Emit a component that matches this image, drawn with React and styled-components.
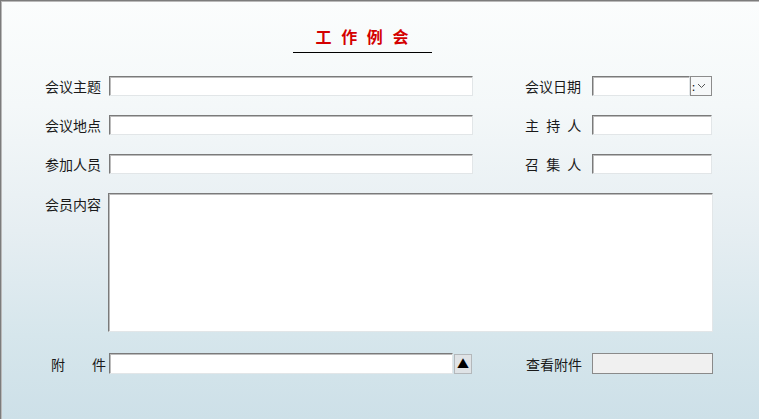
import styled, { createGlobalStyle } from "styled-components";

const Global = createGlobalStyle`
  html, body {
    margin: 0;
    padding: 0;
    background: #ffffff;
  }
  body {
    font-family: "Noto Sans CJK SC", "Liberation Sans", sans-serif;
  }
`;

export default function App() {
  return (
    <>
      <Global />
      <Frame>
        <TitleBox>
          <Title>工 作 例 会</Title>
        </TitleBox>
        <Form>
          <Row>
            <Label>会议主题</Label>
            <Input w={364} />
            <RightLabel>会议日期</RightLabel>
            <DateInput />
            <DropButton>
              <span>:</span>
              <svg width="9" height="6" viewBox="0 0 9 6">
                <path d="M1 1 L4.5 4.5 L8 1" fill="none" stroke="#555" strokeWidth="1" />
              </svg>
            </DropButton>
          </Row>
          <Row>
            <Label>会议地点</Label>
            <Input w={364} />
            <RightLabel spaced>主 持 人</RightLabel>
            <Input w={120} />
          </Row>
          <Row>
            <Label>参加人员</Label>
            <Input w={364} />
            <RightLabel spaced>召 集 人</RightLabel>
            <Input w={120} />
          </Row>
          <AreaRow>
            <AreaLabel>会员内容</AreaLabel>
            <TextArea />
          </AreaRow>
          <BottomRow>
            <SplitLabel>
              <span>附</span>
              <span>件</span>
            </SplitLabel>
            <Input w={344} h={21} />
            <UpButton>▲</UpButton>
            <RightLabel wide>查看附件</RightLabel>
            <Input w={121} h={21} disabled />
          </BottomRow>
        </Form>
      </Frame>
    </>
  );
}

const Frame = styled.div`
  width: 759px;
  height: 419px;
  box-sizing: border-box;
  border-top: 1px solid #7c7c7c;
  border-left: 1px solid #7c7c7c;
  box-shadow: inset 1px 1px 0 #b9b9b9;
  background: linear-gradient(
    to bottom,
    #fbfdfd 0%,
    #f4f8f9 25%,
    #e6eef2 55%,
    #d6e6ec 80%,
    #cde0e8 100%
  );
  overflow: hidden;
`;

const TitleBox = styled.div`
  display: flex;
  justify-content: center;
  padding-top: 23px;
  padding-right: 36px;
`;

const Title = styled.div`
  width: 139px;
  text-align: center;
  color: #d40000;
  font-size: 16px;
  font-weight: bold;
  letter-spacing: 3px;
  text-indent: 3px;
  line-height: 24px;
  border-bottom: 1px solid #000;
  padding-bottom: 4px;
`;

const Form = styled.div`
  display: flex;
  flex-direction: column;
  gap: 19px;
  padding: 23px 0 0 44px;
`;

const Row = styled.div`
  display: flex;
  align-items: center;
  height: 20px;
`;

const Label = styled.div`
  width: 64px;
  font-size: 14px;
  color: #1a1a1a;
  line-height: 20px;
  white-space: nowrap;
`;

const RightLabel = styled.div`
  margin-left: ${(p) => (p.wide ? 54 : 52)}px;
  width: ${(p) => (p.wide ? 66 : 67)}px;
  font-size: 14px;
  color: #1a1a1a;
  line-height: 20px;
  white-space: pre;
  letter-spacing: ${(p) => (p.spaced ? "2px" : "0")};
`;

const Input = styled.input`
  box-sizing: border-box;
  width: ${(p) => p.w}px;
  height: ${(p) => p.h || 20}px;
  margin: 0;
  padding: 0 2px;
  border: 1px solid;
  border-color: #7a7a7a #e2e6e8 #e2e6e8 #7a7a7a;
  box-shadow: inset 1px 1px 0 #bcbcbc;
  background: #ffffff;
  outline: none;
  &:disabled {
    background: #f0f0f0;
    border-color: #8a8a8a;
    box-shadow: none;
  }
`;

const DateInput = styled(Input).attrs({ w: 98 })``;

const DropButton = styled.div`
  box-sizing: border-box;
  width: 22px;
  height: 20px;
  border: 1px solid #8c8c8c;
  background: #f6f8f9;
  display: flex;
  align-items: center;
  gap: 2px;
  padding-left: 1px;
  font-size: 11px;
  color: #000;
  line-height: 1;
`;

const AreaRow = styled.div`
  display: flex;
  align-items: flex-start;
`;

const AreaLabel = styled(Label)`
  padding-top: 1px;
`;

const TextArea = styled.textarea`
  box-sizing: border-box;
  width: 605px;
  height: 139px;
  margin: 0 0 0 -1px;
  resize: none;
  border: 1px solid;
  border-color: #7a7a7a #e2e6e8 #e2e6e8 #7a7a7a;
  box-shadow: inset 1px 1px 0 #bcbcbc;
  background: #ffffff;
  outline: none;
`;

const BottomRow = styled(Row)`
  height: 21px;
  margin-top: 2px;
`;

const SplitLabel = styled.div`
  box-sizing: border-box;
  width: 64px;
  padding: 0 3px 0 6px;
  display: flex;
  justify-content: space-between;
  font-size: 14px;
  color: #1a1a1a;
  line-height: 20px;
`;

const UpButton = styled.div`
  box-sizing: border-box;
  width: 18px;
  height: 20px;
  margin-left: 1px;
  border: 1px solid #b4b8bb;
  background: #dfe3e6;
  display: flex;
  align-items: center;
  justify-content: center;
  font-size: 12px;
  color: #000;
  line-height: 1;
`;
